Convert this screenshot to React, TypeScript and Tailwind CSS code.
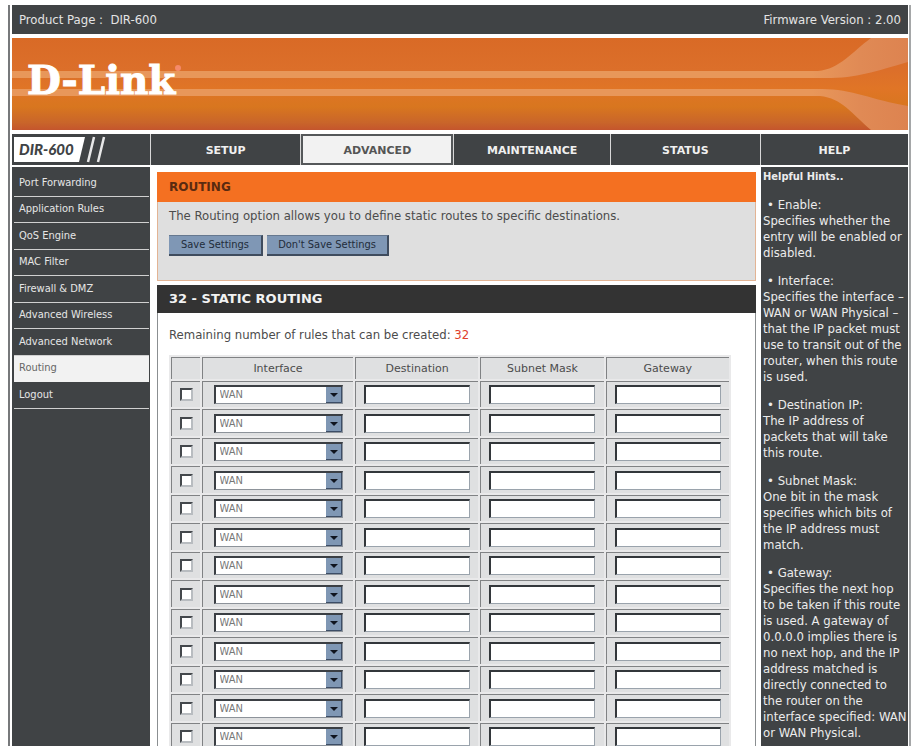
import { useState } from 'react';

const tabs = ['SETUP', 'ADVANCED', 'MAINTENANCE', 'STATUS', 'HELP'];

const menu = [
	'Port Forwarding',
	'Application Rules',
	'QoS Engine',
	'MAC Filter',
	'Firewall & DMZ',
	'Advanced Wireless',
	'Advanced Network',
	'Routing',
	'Logout',
];

const hints = [
	{
		name: 'Enable',
		text: 'Specifies whether the entry will be enabled or disabled.',
	},
	{
		name: 'Interface',
		text: 'Specifies the interface – WAN or WAN Physical – that the IP packet must use to transit out of the router, when this route is used.',
	},
	{
		name: 'Destination IP',
		text: 'The IP address of packets that will take this route.',
	},
	{
		name: 'Subnet Mask',
		text: 'One bit in the mask specifies which bits of the IP address must match.',
	},
	{
		name: 'Gateway',
		text: 'Specifies the next hop to be taken if this route is used. A gateway of 0.0.0.0 implies there is no next hop, and the IP address matched is directly connected to the router on the interface specified: WAN or WAN Physical.',
	},
];

const fields = ['Destination', 'Subnet Mask', 'Gateway'];
const rules = Array.from({ length: 13 }, (_, i) => i + 1);

function Banner() {
	return (
		<div className="relative my-1 h-[92px] bg-[linear-gradient(#d96a26,#dc6f2a_35%,#e07526_55%,#d8761f_75%,#c9652a_92%,#c4552d)]">
			<div className="absolute left-0 right-[96px] top-[33px] h-[7px] bg-[#e8975a]" />
			<div className="absolute left-0 right-[96px] top-[51px] h-[7px] bg-[#e8975a]" />
			<svg
				className="absolute right-0 top-0 h-[92px] w-[96px]"
				viewBox="0 0 96 92"
				aria-hidden="true"
			>
				<defs>
					<linearGradient id="swoosh">
						<stop offset="0" stopColor="#e8975a" />
						<stop offset="0.5" stopColor="#e08a55" />
						<stop offset="1" stopColor="#dd8350" />
					</linearGradient>
				</defs>
				<path
					d="M0 33H6C28 31 40 14 59 0H96V24C60 34 44 41 6 40H0Z"
					fill="url(#swoosh)"
				/>
				<path
					d="M0 51H10C40 51 60 62 96 68V92H59C40 76 30 60 8 58H0Z"
					fill="url(#swoosh)"
				/>
			</svg>
			<div className="absolute left-[15px] top-[19px] flex items-start text-white">
				<span className="font-['DejaVu_Serif'] text-[39px] font-bold leading-[46px] [-webkit-text-stroke:1px_#fff]">
					D-Link
				</span>
				<span className="mt-2 size-[6px] rounded-full bg-[#f58a6a]" />
			</div>
		</div>
	);
}

function Nav() {
	return (
		<nav
			className="grid h-[31px] grid-cols-[138px_149fr_152fr_155fr_149fr_147px] gap-px bg-[#d8d8d8] text-center text-[11px] font-bold"
			aria-label="Main"
		>
			<div className="relative bg-[#404345] text-left">
				<svg
					className="absolute left-0 top-0 h-[31px] w-[100px]"
					viewBox="0 0 100 31"
					aria-hidden="true"
				>
					<path d="M2 3H73L67 28H2Z" fill="#fff" />
					<path
						d="M82 3L76 28M92 3L86 28"
						stroke="#e8e8e8"
						strokeWidth="2.5"
					/>
				</svg>
				<span className="relative block pl-[7px] font-['Lato'] text-[15px] font-black italic leading-[31px] text-[#404345]">
					DIR-600
				</span>
			</div>
			{tabs.map((tab) => (
				<a
					key={tab}
					href="#"
					className={
						tab === 'ADVANCED'
							? 'flex items-center justify-center border-2 border-[#55585a] bg-[#f2f2f2] pt-[3px] text-[#555]'
							: 'flex items-center justify-center bg-[#404345] pt-[3px] text-[#f0f0f0]'
					}
				>
					{tab}
				</a>
			))}
		</nav>
	);
}

function Sidebar() {
	return (
		<nav
			className="bg-[#404345] pt-[3px] font-['DejaVu_Sans_Condensed'] text-[11px]"
			aria-label="Advanced"
		>
			<ul className="grid h-[239px] auto-rows-fr pl-[2px] pr-px">
				{menu.map((item) => (
					<li
						key={item}
						className={
							item === 'Routing'
								? 'flex items-center border-b border-[#f2f2f2] bg-[#f2f2f2] text-[#666]'
								: 'flex items-center border-b border-[#d0d0d0] text-[#e6e6e6]'
						}
					>
						<a href="#" className="pl-[5px]">
							{item}
						</a>
					</li>
				))}
			</ul>
		</nav>
	);
}

function RuleRow({ id }: { id: number }) {
	return (
		<tr className="odd:h-[26px] even:h-[27px]">
			<td className="border-l border-t border-[#808284] bg-[#dfe0e1]">
				<input
					type="checkbox"
					aria-label={`Enable rule ${id}`}
					className="mx-auto block size-[13px] appearance-none border-2 border-b-[#b8bcc0] border-l-[#44484c] border-r-[#b8bcc0] border-t-[#44484c] bg-white checked:bg-[#44484c]"
				/>
			</td>
			<td className="border-l border-t border-[#808284] bg-[#dfe0e1]">
				<div className="relative mx-auto w-[129px]">
					<select
						aria-label={`Interface for rule ${id}`}
						className="block h-[19px] w-full appearance-none rounded-none border border-b-[#8d939a] border-l-2 border-r-[#8d939a] border-t-2 border-[#3b3f44] bg-white pl-1 font-['DejaVu_Sans_Condensed'] text-[11px] leading-[14px] text-[#777]"
					>
						<option>WAN</option>
						<option>WAN Physical</option>
					</select>
					<svg
						className="pointer-events-none absolute right-px top-[2px] h-[16px] w-[16px]"
						viewBox="0 0 16 16"
						aria-hidden="true"
					>
						<rect width="16" height="16" fill="#7f97b4" />
						<path d="M15.5 0V15.5H0" stroke="#3c4d66" fill="none" />
						<path d="M4 6H12L8 10Z" fill="#10151f" />
					</svg>
				</div>
			</td>
			{fields.map((field) => (
				<td
					key={field}
					className="border-l border-t border-[#808284] bg-[#dfe0e1]"
				>
					<input
						type="text"
						aria-label={`${field} for rule ${id}`}
						className="mx-auto block h-[19px] w-[106px] border border-b-[#9aa3ac] border-l-2 border-r-[#9aa3ac] border-t-2 border-[#33373b] bg-white px-1 text-[11px]"
					/>
				</td>
			))}
		</tr>
	);
}

function RoutingPage() {
	const [saved, setSaved] = useState(false);
	const button =
		"h-[21px] border-b-2 border-r-2 border-t border-b-[#3f4c5e] border-r-[#3f4c5e] border-t-[#66788f] bg-[#7f97b5] font-['DejaVu_Sans_Condensed'] text-[11px] text-[#222c3a]";

	return (
		<main className="bg-white pl-[7px] pr-[5px] pt-[5px] text-[#4c4c4c]">
			<section className="h-[109px] border border-[#e3b494] bg-[#dfdfdf]">
				<h1 className="-mx-px -mt-px h-[30px] bg-[#f47021] pl-3 text-[12px] font-bold leading-[30px] text-[#5a2a10]">
					ROUTING
				</h1>
				<p className="pl-[11px] pt-1 font-['DejaVu_Sans_Condensed'] text-[13px] leading-[20px]">
					The Routing option allows you to define static routes to
					specific destinations.
				</p>
				<div className="mt-[9px] flex gap-1 pl-[11px]">
					<button
						type="button"
						className={`w-[94px] ${button}`}
						onClick={() => setSaved(true)}
						disabled={saved}
					>
						Save Settings
					</button>
					<button type="button" className={`w-[122px] ${button}`}>
						Don't Save Settings
					</button>
				</div>
			</section>

			<section className="mt-1 border border-[#8b8f91]">
				<h2 className="-mx-px -mt-px h-[28px] bg-[#333] pl-3 text-[13px] font-bold leading-[28px] text-[#f2f2f2]">
					32 - STATIC ROUTING
				</h2>
				<p className="pl-[11px] pt-3 font-['DejaVu_Sans_Condensed'] text-[13px] leading-[20px]">
					Remaining number of rules that can be created:{' '}
					<span className="text-[#e0402c]">32</span>
				</p>
				<table className="ml-[11px] mt-[10px] w-[562px] table-fixed border-separate border-spacing-[2px] bg-[#e9e9ea]">
					<colgroup>
						<col className="w-[29px]" />
						<col className="w-[151px]" />
						<col />
						<col />
						<col />
					</colgroup>
					<thead>
						<tr className="h-[22px] text-[11px] leading-[20px]">
							<th className="border-l border-t border-[#808284] bg-[#dfe0e1] p-0" />
							{['Interface', ...fields].map((name) => (
								<th
									key={name}
									className="border-l border-t border-[#808284] bg-[#dfe0e1] p-0 font-normal"
								>
									{name}
								</th>
							))}
						</tr>
					</thead>
					<tbody>
						{rules.map((id) => (
							<RuleRow key={id} id={id} />
						))}
					</tbody>
				</table>
			</section>
		</main>
	);
}

function Hints() {
	return (
		<aside className="bg-[#404345] pl-[2px] pt-[2px] font-['DejaVu_Sans_Condensed'] text-[13px] leading-[16px] text-[#ececec]">
			<h3 className="text-[11px] font-bold">Helpful Hints..</h3>
			{hints.map((hint) => (
				<div key={hint.name} className="mt-3">
					<p className="pl-1">• {hint.name}:</p>
					<p>{hint.text}</p>
				</div>
			))}
		</aside>
	);
}

export default function App() {
	return (
		<div className="h-screen overflow-hidden bg-white pb-[2px] pl-2 pr-px pt-[5px] font-['DejaVu_Sans']">
			<div className="flex h-full flex-col overflow-hidden border-x-2 border-l-[#77797b] border-r-[#a5a7a8] bg-white pl-[2px] pr-px">
				<header>
					<div className="flex h-[29px] items-center justify-between bg-[#404345] px-[7px] font-['DejaVu_Sans_Condensed'] text-[13px] text-[#e4e4e4]">
						<span>Product Page :&nbsp; DIR-600</span>
						<span>Firmware Version : 2.00</span>
					</div>
					<Banner />
				</header>
				<Nav />
				<div className="mt-[2px] grid min-h-0 flex-1 grid-cols-[138px_1fr_147px]">
					<Sidebar />
					<RoutingPage />
					<Hints />
				</div>
			</div>
		</div>
	);
}
